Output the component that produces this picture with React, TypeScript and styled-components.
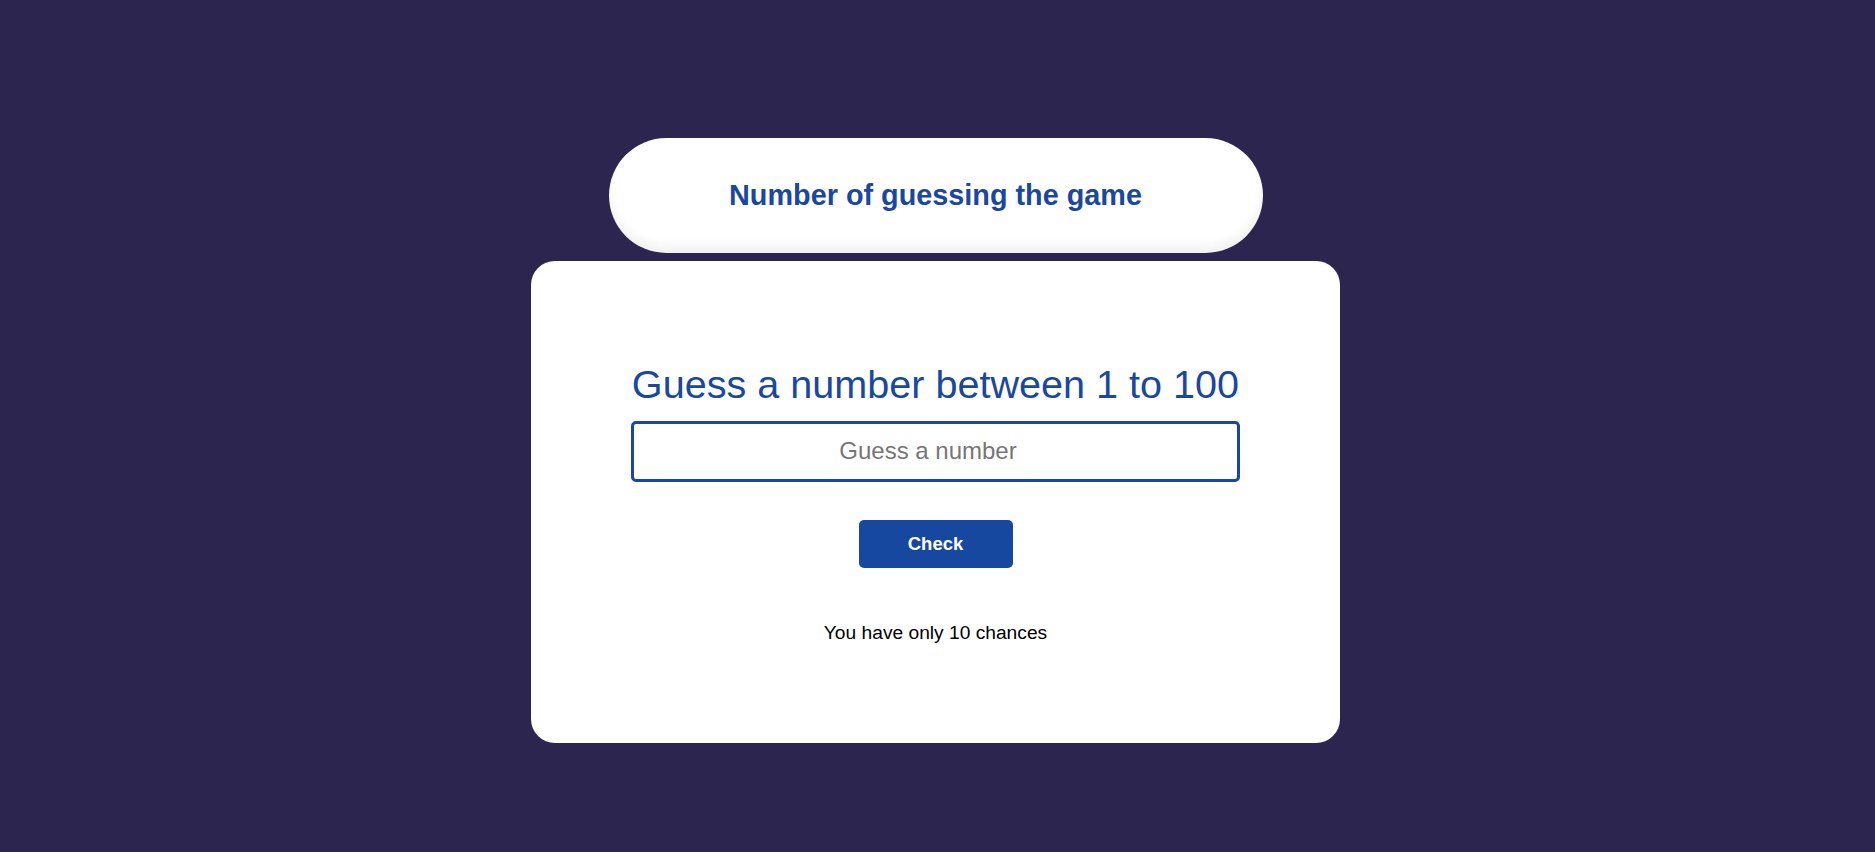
import React from "react";
import styled, { createGlobalStyle } from "styled-components";

const GlobalStyle = createGlobalStyle`
  html, body {
    margin: 0;
    padding: 0;
    background: #2b2550;
    font-family: "Liberation Sans", Arial, sans-serif;
  }
  * { box-sizing: border-box; }
`;

const Page = styled.main`
  min-height: 852px;
  display: flex;
  flex-direction: column;
  align-items: center;
  padding-top: 138px;
  padding-right: 4px;
`;

const TitlePill = styled.header`
  width: 654px;
  height: 115px;
  border-radius: 58px;
  background: #ffffff;
  box-shadow: inset 0 -8px 10px rgba(0, 0, 0, 0.05);
  display: flex;
  align-items: center;
  justify-content: center;
`;

const Title = styled.h1`
  margin: 0;
  font-size: 28.8px;
  font-weight: 700;
  color: #1a47a0;
  line-height: 1;
`;

const Card = styled.section`
  margin-top: 8px;
  width: 809px;
  height: 482px;
  border-radius: 24px;
  background: #ffffff;
  display: flex;
  flex-direction: column;
  align-items: center;
  padding-top: 100px;
`;

const Heading = styled.h2`
  margin: 0;
  font-size: 39.6px;
  font-weight: 400;
  line-height: 46px;
  color: #1a47a0;
`;

const GuessInput = styled.input`
  margin-top: 13.5px;
  width: 609px;
  height: 61px;
  border: 3px solid #1a47a0;
  border-radius: 5px;
  background: #fff;
  text-align: center;
  font-family: "Liberation Sans", Arial, sans-serif;
  font-size: 24px;
  color: #222;
  outline: none;
  &::placeholder {
    color: #767676;
  }
`;

const CheckButton = styled.button`
  margin-top: 38.5px;
  width: 154px;
  height: 48px;
  border: none;
  border-radius: 5px;
  background: #17489f;
  color: #ffffff;
  font-family: "Liberation Sans", Arial, sans-serif;
  font-size: 18.5px;
  font-weight: 700;
  cursor: pointer;
`;

const Chances = styled.p`
  margin: 53.5px 0 0;
  font-size: 19.2px;
  line-height: 22px;
  color: #000;
`;

export default function App() {
  return (
    <>
      <GlobalStyle />
      <Page>
        <TitlePill>
          <Title>Number of guessing the game</Title>
        </TitlePill>
        <Card>
          <Heading>Guess a number between 1 to 100</Heading>
          <GuessInput type="number" placeholder="Guess a number" />
          <CheckButton>Check</CheckButton>
          <Chances>You have only 10 chances</Chances>
        </Card>
      </Page>
    </>
  );
}
